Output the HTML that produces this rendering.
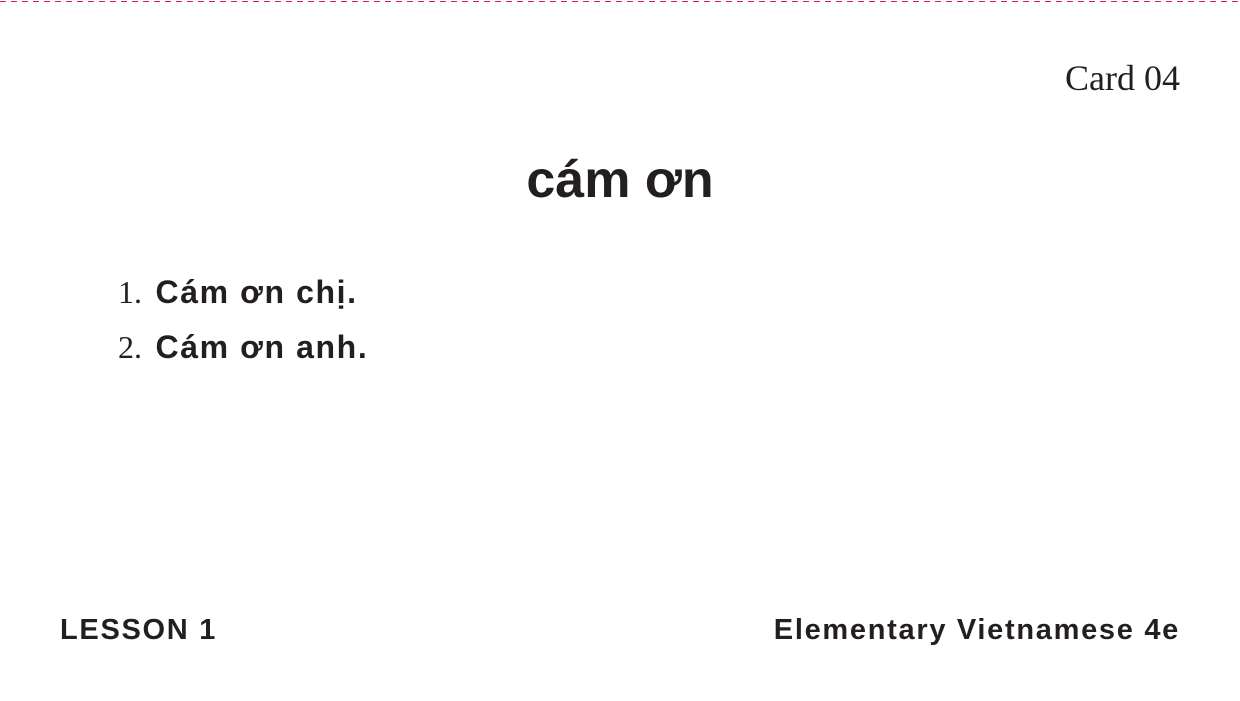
<!DOCTYPE html>
<html><head><meta charset="utf-8"><style>
html,body{margin:0;padding:0;background:#fff;}
body{width:1240px;height:701px;position:relative;overflow:hidden;color:#231f20;}
.dash{position:absolute;left:0;top:1px;width:1240px;height:1px;background:repeating-linear-gradient(90deg,#e0187a 0 6px,transparent 6px 11px);}
.card{position:absolute;right:60px;top:57px;font:36px "Liberation Serif",serif;}
.title{position:absolute;left:0;width:1240px;text-align:center;top:150px;font:bold 52px "Liberation Sans",sans-serif;}
.li{position:absolute;left:118px;font:bold 32px "Liberation Sans",sans-serif;letter-spacing:1.6px;}
.li span{font:normal 32px "Liberation Serif",serif;letter-spacing:0;margin-right:3px;}
.f{position:absolute;top:614px;font:bold 29px "Liberation Sans",sans-serif;letter-spacing:1.7px;}
</style></head><body>
<div class="dash"></div>
<div class="card">Card 04</div>
<div class="title">cám ơn</div>
<div class="li" style="top:274px"><span>1.</span> Cám ơn chị.</div>
<div class="li" style="top:329px"><span>2.</span> Cám ơn anh.</div>
<div class="f" style="left:60px">LESSON 1</div>
<div class="f" style="right:60px">Elementary Vietnamese 4e</div>
</body></html>
